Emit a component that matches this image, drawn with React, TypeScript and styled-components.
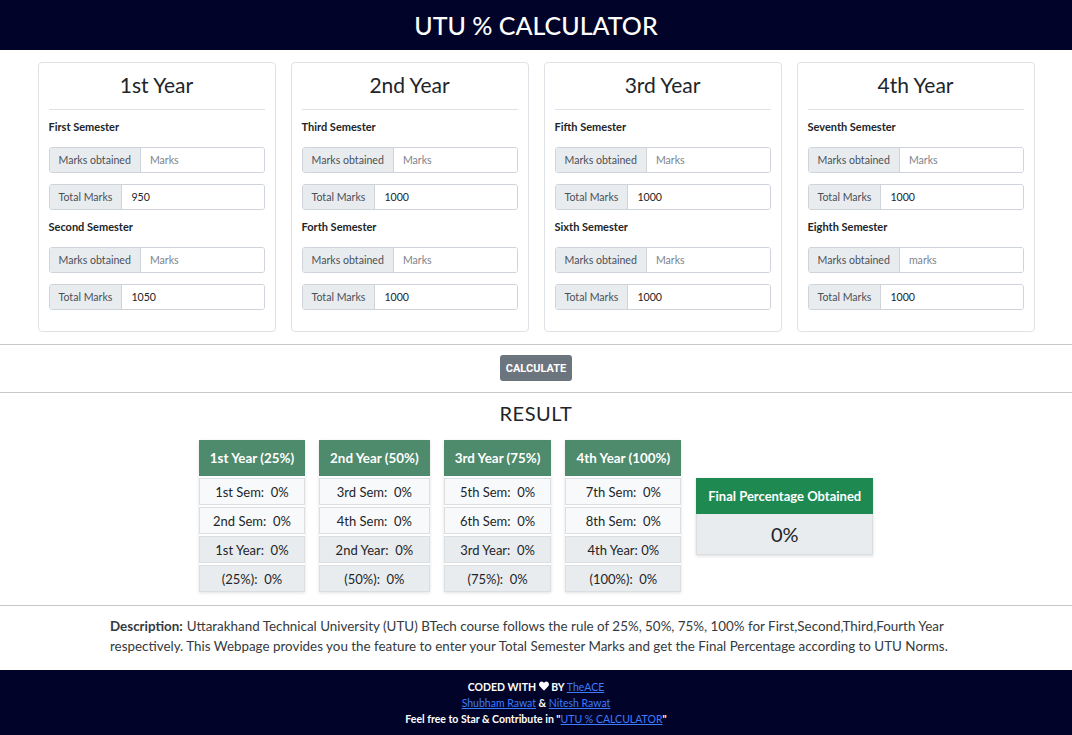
import React from "react";
import styled, {createGlobalStyle} from "styled-components";
import {FaHeart} from "react-icons/fa";

const GlobalStyle = createGlobalStyle`
  html, body {
    margin: 0;
    padding: 0;
    background: #ffffff;
    font-family: Lato, "Open Sans", sans-serif;
    color: #212529;
  }
  * {
    box-sizing: border-box;
  }
`;

const Header = styled.header`
  height: 50px;
  background: #010428;
  display: flex;
  align-items: center;
  justify-content: center;
  color: #ffffff;
  font-size: 25px;
  font-weight: 500;
`;

const CardRow = styled.div`
  display: flex;
  justify-content: center;
  gap: 15px;
  padding-top: 12px;
  padding-bottom: 12px;
`;

const Card = styled.div`
  width: 238px;
  border: 1px solid #dee2e6;
  border-radius: 4px;
  padding: 0 10px 21px;
`;

const CardTitle = styled.div`
  margin-top: 9px;
  height: 26px;
  line-height: 26px;
  text-align: center;
  font-size: 21px;
  color: #212529;
`;

const CardRule = styled.div`
  margin-top: 11px;
  border-top: 1px solid #dee2e6;
`;

const SemLabel = styled.div`
  margin-top: 9px;
  margin-bottom: 12px;
  height: 16px;
  line-height: 16px;
  font-size: 11px;
  font-weight: bold;
  color: #212529;
`;

const InputGroup = styled.div<{$last?: boolean}>`
  display: flex;
  height: 26px;
  border: 1px solid #ced4da;
  border-radius: 3px;
  overflow: hidden;
  margin-bottom: ${(p) => (p.$last ? "0" : "11px")};
`;

const Prefix = styled.span`
  display: flex;
  align-items: center;
  padding: 0 9px;
  background: #e9ecef;
  border-right: 1px solid #ced4da;
  font-size: 10.6px;
  color: #495057;
  white-space: nowrap;
`;

const Field = styled.input`
  flex: 1;
  min-width: 0;
  border: none;
  outline: none;
  padding: 0 9px;
  font-family: Lato, "Open Sans", sans-serif;
  font-size: 10.6px;
  color: #212529;
  &::placeholder {
    color: #7d848b;
  }
`;

const Rule = styled.div`
  border-top: 1px solid #c8c8c8;
`;

const ButtonBar = styled.div`
  display: flex;
  justify-content: center;
  padding: 10px 0 11px;
`;

const CalcButton = styled.button`
  height: 26px;
  padding: 0 6px;
  border: none;
  border-radius: 3px;
  background: #6c757d;
  color: #ffffff;
  font-family: Roboto, sans-serif;
  font-size: 11px;
  font-weight: bold;
  text-transform: uppercase;
`;

const ResultTitle = styled.div`
  margin-top: 8px;
  text-align: center;
  font-size: 20px;
  line-height: 24px;
  color: #212529;
  letter-spacing: 0.5px;
`;

const ResultRow = styled.div`
  display: flex;
  justify-content: center;
  align-items: center;
  gap: 14px;
  margin-top: 15px;
  margin-bottom: 13px;
`;

const YearTable = styled.div`
  display: flex;
  flex-direction: column;
  gap: 2px;
  box-shadow: 0 1px 3px rgba(0, 0, 0, 0.12);
`;

const YearHead = styled.div`
  height: 36px;
  padding: 0 11px;
  display: flex;
  align-items: center;
  justify-content: center;
  background: #4e8a6c;
  color: #ffffff;
  font-size: 13.4px;
  font-weight: bold;
  white-space: nowrap;
`;

const YearCell = styled.div<{$shade?: boolean}>`
  height: 27px;
  display: flex;
  align-items: center;
  justify-content: center;
  border: 1px solid #dcdfe2;
  background: ${(p) => (p.$shade ? "#e9ecef" : "#f8f9fa")};
  font-size: 13px;
  color: #212529;
  white-space: pre;
`;

const FinalBox = styled.div`
  width: 177px;
  margin-left: 1px;
  box-shadow: 0 1px 3px rgba(0, 0, 0, 0.15);
`;

const FinalHead = styled.div`
  height: 36px;
  display: flex;
  align-items: center;
  justify-content: center;
  background: #1e8a52;
  color: #ffffff;
  font-size: 13px;
  font-weight: bold;
`;

const FinalValue = styled.div`
  height: 41px;
  display: flex;
  align-items: center;
  justify-content: center;
  background: #e9ecef;
  border: 1px solid #dcdfe2;
  border-top: none;
  font-size: 20px;
  color: #212529;
`;

const Description = styled.p`
  width: 852px;
  margin: 0 auto;
  padding: 10px 0 14px;
  font-size: 13.4px;
  line-height: 20px;
  color: #343a40;
`;

const DescLabel = styled.b`
  font-weight: bold;
  margin-right: 4px;
`;

const Footer = styled.footer`
  height: 65px;
  background: #010428;
  padding-top: 9px;
  text-align: center;
  color: #ffffff;
  font-size: 10.5px;
  font-weight: bold;
  line-height: 16px;
`;

const FootLink = styled.a`
  color: #3d7bff;
  font-weight: normal;
  text-decoration: underline;
`;

const years = [
  {title: "1st Year", sems: [["First Semester", "Marks", "950"], ["Second Semester", "Marks", "1050"]]},
  {title: "2nd Year", sems: [["Third Semester", "Marks", "1000"], ["Forth Semester", "Marks", "1000"]]},
  {title: "3rd Year", sems: [["Fifth Semester", "Marks", "1000"], ["Sixth Semester", "Marks", "1000"]]},
  {title: "4th Year", sems: [["Seventh Semester", "Marks", "1000"], ["Eighth Semester", "marks", "1000"]]},
];

const results = [
  {head: "1st Year (25%)", rows: ["1st Sem:  0%", "2nd Sem:  0%", "1st Year:  0%", "(25%):  0%"]},
  {head: "2nd Year (50%)", rows: ["3rd Sem:  0%", "4th Sem:  0%", "2nd Year:  0%", "(50%):  0%"]},
  {head: "3rd Year (75%)", rows: ["5th Sem:  0%", "6th Sem:  0%", "3rd Year:  0%", "(75%):  0%"]},
  {head: "4th Year (100%)", rows: ["7th Sem:  0%", "8th Sem:  0%", "4th Year: 0%", "(100%):  0%"]},
];

export default function App() {
  return (
    <>
      <GlobalStyle />
      <Header>UTU % CALCULATOR</Header>
      <CardRow>
        {years.map((y) => (
          <Card key={y.title}>
            <CardTitle>{y.title}</CardTitle>
            <CardRule />
            {y.sems.map((s) => (
              <div key={s[0]}>
                <SemLabel>{s[0]}</SemLabel>
                <InputGroup>
                  <Prefix>Marks obtained</Prefix>
                  <Field placeholder={s[1]} />
                </InputGroup>
                <InputGroup $last>
                  <Prefix>Total Marks</Prefix>
                  <Field defaultValue={s[2]} />
                </InputGroup>
              </div>
            ))}
          </Card>
        ))}
      </CardRow>
      <Rule />
      <ButtonBar>
        <CalcButton>Calculate</CalcButton>
      </ButtonBar>
      <Rule />
      <ResultTitle>RESULT</ResultTitle>
      <ResultRow>
        {results.map((r) => (
          <YearTable key={r.head}>
            <YearHead>{r.head}</YearHead>
            {r.rows.map((row, i) => (
              <YearCell key={row} $shade={i > 1}>
                {row}
              </YearCell>
            ))}
          </YearTable>
        ))}
        <FinalBox>
          <FinalHead>Final Percentage Obtained</FinalHead>
          <FinalValue>0%</FinalValue>
        </FinalBox>
      </ResultRow>
      <Rule />
      <Description>
        <DescLabel>Description:</DescLabel>Uttarakhand Technical University (UTU) BTech course follows the rule of 25%,
        50%, 75%, 100% for First,Second,Third,Fourth Year respectively. This Webpage provides you the feature to enter
        your Total Semester Marks and get the Final Percentage according to UTU Norms.
      </Description>
      <Footer>
        <div>
          CODED WITH <FaHeart size={10} /> BY <FootLink href="#">TheACE</FootLink>
        </div>
        <div>
          <FootLink href="#">Shubham Rawat</FootLink> &amp; <FootLink href="#">Nitesh Rawat</FootLink>
        </div>
        <div>
          Feel free to Star &amp; Contribute in "<FootLink href="#">UTU % CALCULATOR</FootLink>"
        </div>
      </Footer>
    </>
  );
}
